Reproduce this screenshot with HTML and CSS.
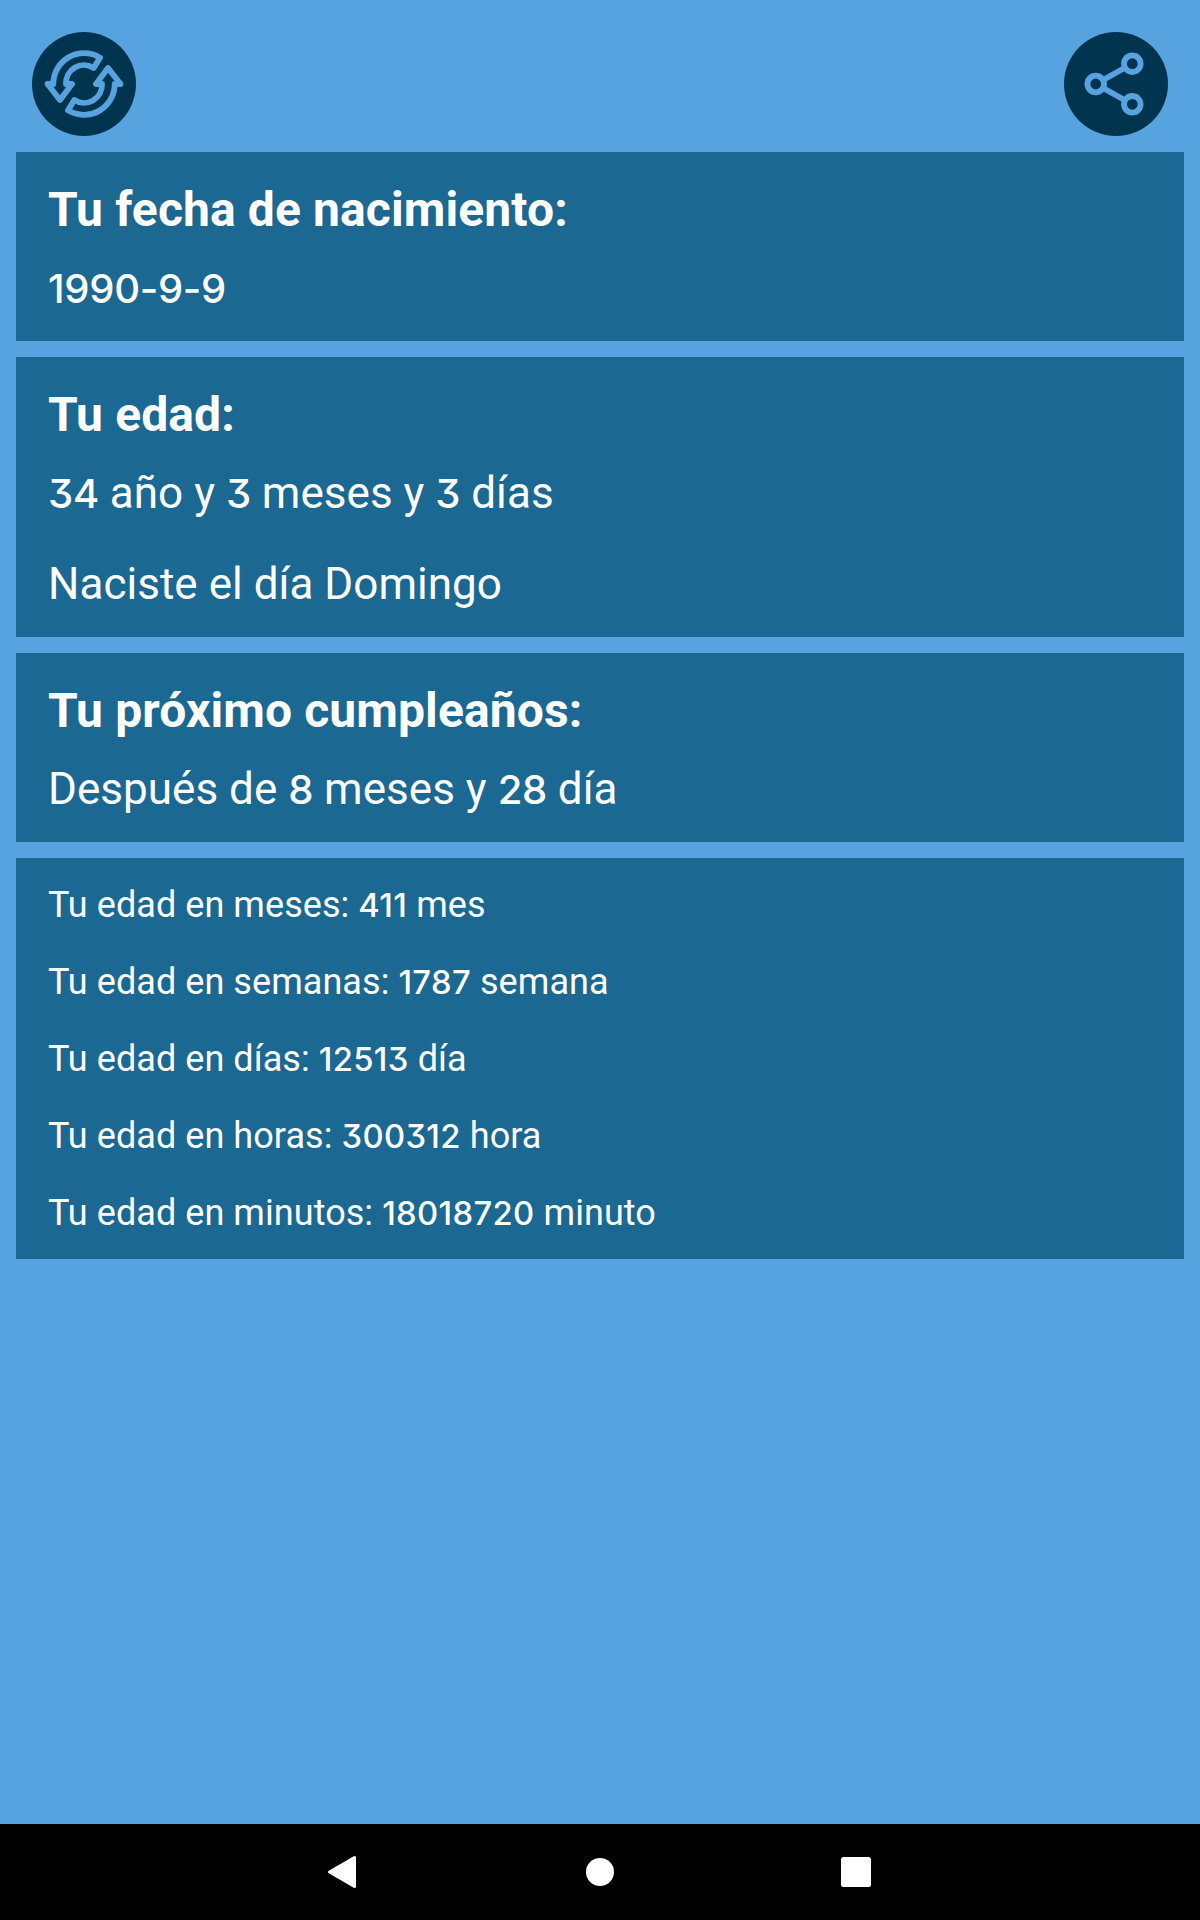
FILE: index.html
```html
<!DOCTYPE html>
<html lang="es">
<head>
<meta charset="utf-8">
<title>Tu edad</title>
<link rel="stylesheet" href="styles.css">
</head>
<body>
<div class="screen">
  <header class="toolbar">
    <button class="round" aria-label="Reiniciar">
      <svg viewBox="0 0 104 104" fill="none" stroke="currentColor" stroke-width="5.8" stroke-linejoin="round">
        <path d="M68 25.7A30.7 30.7 0 0 0 21.3 52H15.5L28 68 40 52H34A18 18 0 0 1 61.7 36Z"/>
        <path d="M36 78.3A30.7 30.7 0 0 0 82.7 52H88.5L76 36 64 52H70A18 18 0 0 1 42.3 68Z"/>
      </svg>
    </button>
    <button class="round" aria-label="Compartir">
      <svg viewBox="0 0 104 104" fill="none" stroke="currentColor" stroke-width="5.8">
        <circle cx="31.7" cy="52" r="8.3"/>
        <circle cx="68.3" cy="31.7" r="8.3"/>
        <circle cx="68.3" cy="72.3" r="8.3"/>
        <path d="M39.5 47.7L60.5 36M39.5 56.3L60.5 68"/>
      </svg>
    </button>
  </header>
  <main class="cards">
    <section class="card">
      <h2 class="title">Tu fecha de nacimiento:</h2>
      <p class="value"><span class="num">1990-9-9</span></p>
    </section>
    <section class="card">
      <h2 class="title">Tu edad:</h2>
      <p class="value"><span class="num">34</span> año y <span class="num">3</span> meses y <span class="num">3</span> días</p>
      <p class="value">Naciste el día Domingo</p>
    </section>
    <section class="card">
      <h2 class="title">Tu próximo cumpleaños:</h2>
      <p class="value">Después de <span class="num">8</span> meses y <span class="num">28</span> día</p>
    </section>
    <section class="card list">
      <p class="row">Tu edad en meses: <span class="num">411</span> mes</p>
      <p class="row">Tu edad en semanas: <span class="num">1787</span> semana</p>
      <p class="row">Tu edad en días: <span class="num">12513</span> día</p>
      <p class="row">Tu edad en horas: <span class="num">300312</span> hora</p>
      <p class="row">Tu edad en minutos: <span class="num">18018720</span> minuto</p>
    </section>
  </main>
  <nav class="navbar">
    <svg class="key" viewBox="0 0 40 40"><path d="M5.5 20L30.5 5.5V34.5Z" stroke="currentColor" stroke-width="3" stroke-linejoin="round"/></svg>
    <svg class="key" viewBox="0 0 40 40"><circle cx="20" cy="20" r="14"/></svg>
    <svg class="key" viewBox="0 0 40 40"><rect x="5" y="5" width="30" height="30" rx="2.5"/></svg>
  </nav>
</div>
</body>
</html>
```
FILE: styles.css
```css
* {
  box-sizing: border-box;
  margin: 0;
  padding: 0;
}

body {
  background: #56a3e0;
  color: #fff;
  font-family: Roboto, "Liberation Sans", sans-serif;
}

.screen {
  display: flex;
  flex-direction: column;
  height: 1920px;
}

.toolbar {
  display: flex;
  justify-content: space-between;
  padding: 32px 32px 16px;
}

.round {
  width: 104px;
  height: 104px;
  border: 0;
  border-radius: 50%;
  background: #00344f;
  color: #56a3e0;
}

.round svg {
  display: block;
  width: 104px;
  height: 104px;
}

.cards {
  flex: 1;
  display: flex;
  flex-direction: column;
  gap: 16px;
  padding: 0 16px;
}

.card {
  padding: 30px 32px 7px;
  background: #1b6892;
}

.title {
  margin-bottom: 5px;
  font-size: 48px;
  font-weight: 700;
  line-height: 56px;
  letter-spacing: 0.11px;
}

.value {
  font-size: 44px;
  line-height: 91px;
  letter-spacing: 0.03px;
  white-space: nowrap;
}

.list {
  padding: 9px 32px 7px;
}

.row {
  font-size: 36px;
  line-height: 77px;
  letter-spacing: 0.06px;
  white-space: nowrap;
}

/* Geometric numerals with a flat-topped three */
.num {
  font-family: Inter, sans-serif;
  font-size: 0.91em;
  font-weight: 500;
  line-height: 0;
  letter-spacing: -0.3px;
  font-feature-settings: "cv09";
}

.row .num {
  letter-spacing: 0.35px;
}

.navbar {
  display: flex;
  justify-content: center;
  align-items: center;
  gap: 216px;
  height: 96px;
  background: #000;
}

.key {
  width: 40px;
  height: 40px;
  fill: currentColor;
}
```
